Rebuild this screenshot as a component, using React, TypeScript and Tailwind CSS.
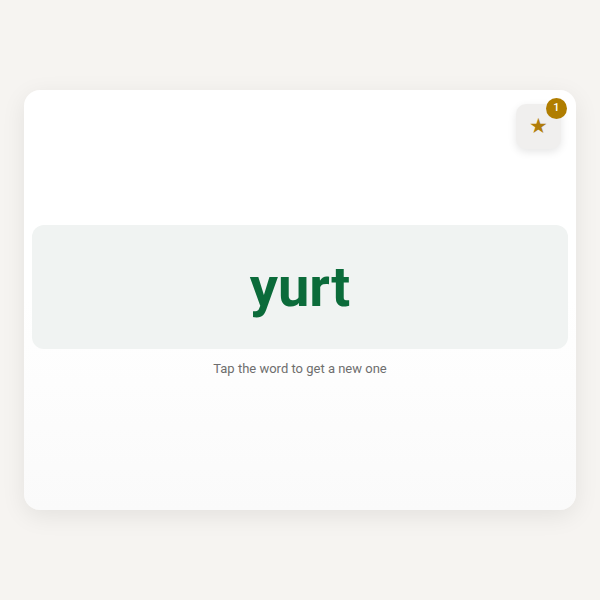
export default function App() {
  return (
    <div className="flex h-[600px] w-[600px] items-center justify-center bg-[#f6f4f1] font-['Roboto',sans-serif]">
      <div className="relative flex h-[420px] w-[552px] flex-col items-center justify-center rounded-2xl bg-gradient-to-b from-white via-white to-[#fafafa] px-2 pt-1 shadow-[0_6px_24px_rgba(0,0,0,0.08)]">
        <button className="absolute right-[15px] top-[14px] flex h-[45px] w-[45px] items-center justify-center rounded-[10px] bg-[#f0efee] text-[21px] text-[#b07d0a] shadow-[0_3px_8px_rgba(0,0,0,0.1)]">
          ★
          <span className="absolute -right-[6px] -top-[6px] flex h-[21px] w-[21px] items-center justify-center rounded-full bg-[#b07d00] text-[11px] font-medium text-white">
            1
          </span>
        </button>
        <div className="flex h-[124px] w-full items-center justify-center rounded-xl bg-[#f0f3f2]">
          <span className="text-[56px] font-bold leading-none text-[#0b6b3a]">yurt</span>
        </div>
        <p className="mt-[10px] text-[13px] leading-5 text-[#6e6e6e]">Tap the word to get a new one</p>
      </div>
    </div>
  );
}
